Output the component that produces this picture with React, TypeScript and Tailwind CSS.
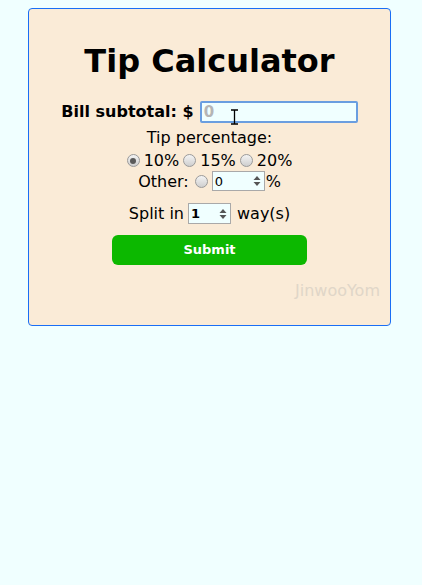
import React from "react";

function Radio({ checked }: { checked?: boolean }) {
  return (
    <span className="inline-flex w-[13px] h-[13px] rounded-full border border-[#9a9a9a] bg-gradient-to-b from-[#f4f4f4] to-[#cfcfcf] items-center justify-center">
      {checked && <span className="w-[6px] h-[6px] rounded-full bg-[#5a5a5a]" />}
    </span>
  );
}

function Spin() {
  return (
    <svg width="8" height="12" viewBox="0 0 8 12" className="mr-[3px]">
      <path d="M4 1 L7.5 5 L0.5 5 Z" fill="#555" />
      <path d="M4 11 L7.5 7 L0.5 7 Z" fill="#555" />
    </svg>
  );
}

export default function App() {
  return (
    <div
      className="min-h-[585px] w-full bg-[#f0ffff] pt-[8px] text-black"
      style={{ fontFamily: "'DejaVu Sans', Verdana, sans-serif" }}
    >
      <div className="relative ml-[28px] w-[363px] rounded-[4px] border border-[#1a6ef5] bg-[#faebd7] pt-[34px] pb-[25px] flex flex-col items-center">
        <h1 className="text-[32px] leading-[37px] font-bold">Tip Calculator</h1>

        <div className="mt-[21px] flex items-center h-[22px] text-[16px] font-bold">
          <span>Bill subtotal: $</span>
          <div className="relative ml-[6px] w-[158px] h-[22px] rounded-[2px] border-2 border-[#6a9ee0] bg-[#f0ffff] flex items-center pl-[2px]">
            <span className="text-[15px] font-bold text-[#b5b5b5]">0</span>
            <svg
              width="9"
              height="16"
              viewBox="0 0 9 16"
              className="absolute left-[28px] top-[6px]"
            >
              <path d="M1 1 H8 M4.5 1 V15 M1 15 H8" stroke="#000" strokeWidth="1.3" fill="none" />
            </svg>
          </div>
        </div>

        <div className="mt-[5px] text-[16px] leading-[19px]">Tip percentage:</div>

        <div className="mt-[4px] flex items-center gap-[4px] h-[19px] text-[16px] leading-[19px]">
          <Radio checked />
          <span>10%</span>
          <Radio />
          <span>15%</span>
          <Radio />
          <span>20%</span>
        </div>

        <div className="mt-[1px] flex items-center h-[20px] text-[16px] leading-[19px]">
          <span className="mr-[6px]">Other:</span>
          <Radio />
          <div className="ml-[4px] w-[53px] h-[20px] border border-[#a9a9a9] bg-[#f0ffff] flex items-center justify-between pl-[2px]">
            <span className="text-[13px]">0</span>
            <Spin />
          </div>
          <span className="ml-[1px]">%</span>
        </div>

        <div className="mt-[12px] flex items-center h-[21px] text-[16px] leading-[19px]">
          <span>Split in</span>
          <div className="ml-[4px] w-[43px] h-[21px] border border-[#a9a9a9] bg-[#f0ffff] flex items-center justify-between pl-[2px]">
            <span className="text-[13px] font-bold">1</span>
            <Spin />
          </div>
          <span className="ml-[6px]">way(s)</span>
        </div>

        <button className="mt-[11px] w-[195px] h-[30px] rounded-[6px] bg-[#0cb800] text-white text-[13px] font-bold">
          Submit
        </button>

        <div className="mt-[16px] self-end mr-[10px] text-[16px] leading-[19px] text-[#e0d6c8]">
          JinwooYom
        </div>
      </div>
    </div>
  );
}
